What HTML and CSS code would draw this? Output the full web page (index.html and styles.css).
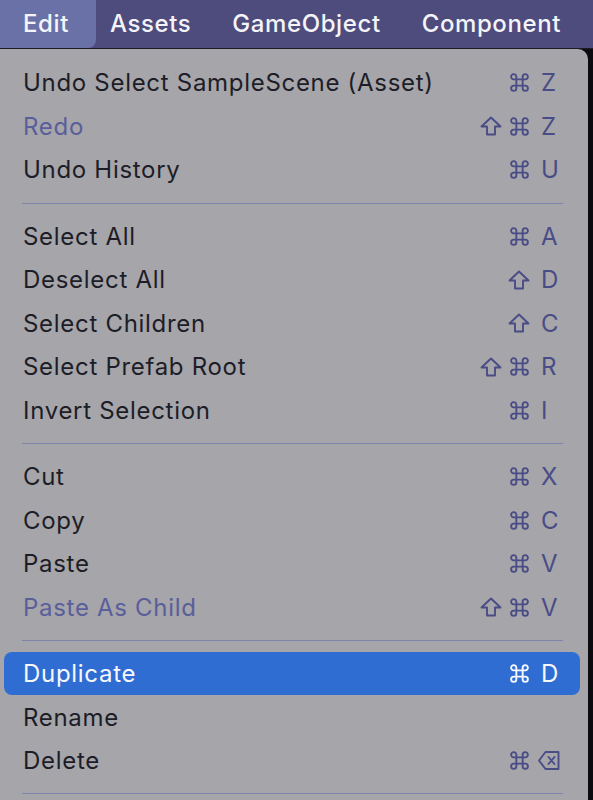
FILE: index.html
```html
<!DOCTYPE html>
<html>
<head>
<meta charset="utf-8">
<link rel="stylesheet" href="styles.css">
</head>
<body>
<svg width="0" height="0" class="defs">
  <defs>
    <symbol id="cmd" viewBox="0 0 20 20"><path d="M7 7V4.5A2.5 2.5 0 1 0 4.5 7H15.5A2.5 2.5 0 1 0 13 4.5V15.5A2.5 2.5 0 1 0 15.5 13H4.5A2.5 2.5 0 1 0 7 15.5Z" fill="none" stroke="currentColor" stroke-width="1.8" stroke-linejoin="round"/></symbol>
    <symbol id="shift" viewBox="0 0 22 20"><path d="M11 1.5L20.5 10.5H15V18.5H7V10.5H1.5Z" fill="none" stroke="currentColor" stroke-width="1.9" stroke-linejoin="round"/></symbol>
    <symbol id="del" viewBox="0 0 22 20"><path d="M7.5 1.5H20.5V18.5H7.5L1 10Z" fill="none" stroke="currentColor" stroke-width="1.9" stroke-linejoin="round"/><path d="M10.5 6.5L16.5 13.5M16.5 6.5L10.5 13.5" fill="none" stroke="currentColor" stroke-width="1.9" stroke-linecap="round"/></symbol>
  </defs>
</svg>
<div class="menubar">
  <div class="mb-item active">Edit</div>
  <div class="mb-item">Assets</div>
  <div class="mb-item">GameObject</div>
  <div class="mb-item">Component</div>
</div>
<div class="menu">
  <div class="row"><span class="label">Undo Select SampleScene (Asset)</span><span class="sc"><svg class="ic cmd"><use href="#cmd"/></svg><span class="key">Z</span></span></div>
  <div class="row disabled"><span class="label">Redo</span><span class="sc"><svg class="ic shift"><use href="#shift"/></svg><svg class="ic cmd"><use href="#cmd"/></svg><span class="key">Z</span></span></div>
  <div class="row"><span class="label">Undo History</span><span class="sc"><svg class="ic cmd"><use href="#cmd"/></svg><span class="key">U</span></span></div>
  <div class="sep"></div>
  <div class="row"><span class="label">Select All</span><span class="sc"><svg class="ic cmd"><use href="#cmd"/></svg><span class="key">A</span></span></div>
  <div class="row"><span class="label">Deselect All</span><span class="sc"><svg class="ic shift"><use href="#shift"/></svg><span class="key">D</span></span></div>
  <div class="row"><span class="label">Select Children</span><span class="sc"><svg class="ic shift"><use href="#shift"/></svg><span class="key">C</span></span></div>
  <div class="row"><span class="label">Select Prefab Root</span><span class="sc"><svg class="ic shift"><use href="#shift"/></svg><svg class="ic cmd"><use href="#cmd"/></svg><span class="key">R</span></span></div>
  <div class="row"><span class="label">Invert Selection</span><span class="sc"><svg class="ic cmd"><use href="#cmd"/></svg><span class="key">I</span></span></div>
  <div class="sep"></div>
  <div class="row"><span class="label">Cut</span><span class="sc"><svg class="ic cmd"><use href="#cmd"/></svg><span class="key">X</span></span></div>
  <div class="row"><span class="label">Copy</span><span class="sc"><svg class="ic cmd"><use href="#cmd"/></svg><span class="key">C</span></span></div>
  <div class="row"><span class="label">Paste</span><span class="sc"><svg class="ic cmd"><use href="#cmd"/></svg><span class="key">V</span></span></div>
  <div class="row disabled"><span class="label">Paste As Child</span><span class="sc"><svg class="ic shift"><use href="#shift"/></svg><svg class="ic cmd"><use href="#cmd"/></svg><span class="key">V</span></span></div>
  <div class="sep"></div>
  <div class="row selected"><span class="label">Duplicate</span><span class="sc"><svg class="ic cmd"><use href="#cmd"/></svg><span class="key">D</span></span></div>
  <div class="row"><span class="label">Rename</span><span class="sc"></span></div>
  <div class="row"><span class="label">Delete</span><span class="sc"><svg class="ic cmd"><use href="#cmd"/></svg><span class="key"><svg class="ic del"><use href="#del"/></svg></span></span></div>
  <div class="sep"></div>
</div>
</body>
</html>
```
FILE: styles.css
```css
html, body {
  margin: 0;
  padding: 0;
  background: #0c0c10;
  width: 593px;
  height: 800px;
  overflow: hidden;
  font-family: Inter, "Noto Sans", sans-serif;
}
.defs { position: absolute; }
.menubar {
  height: 48px;
  background: #4e4c7d;
  display: flex;
  align-items: stretch;
  border-bottom: 1px solid #1c1c24;
}
.mb-item {
  color: #f4f4f8;
  font-size: 24px;
  font-weight: 500;
  letter-spacing: 0.6px;
  display: flex;
  align-items: center;
  padding: 0 27px 2px 14px;
}
.mb-item.active {
  background: #6a71a7;
  padding-left: 23px;
  padding-right: 27px;
  border-radius: 0 0 8px 0;
}
.menu {
  width: 576px;
  height: 751px;
  background: #a5a5aa;
  padding: 12px 8px 0 4px;
  border-radius: 0 10px 0 0;
  box-sizing: content-box;
}
.row {
  height: 43.6px;
  display: flex;
  align-items: center;
  padding: 0 17px 0 19px;
  color: #1d1d27;
  font-size: 24px;
  letter-spacing: 0.7px;
  border-radius: 8px;
}
.row .label { flex: 1; }
.row.disabled { color: #5a5e9b; }
.sc {
  display: flex;
  align-items: center;
  color: #4a4c86;
  gap: 7px;
}
.key {
  width: 22px;
  margin-left: 4px;
  display: flex;
  align-items: center;
}
.ic { display: block; }
.ic.cmd { width: 21px; height: 21px; }
.ic.shift { width: 22px; height: 20px; }
.ic.del { width: 22px; height: 21px; margin-left: -3px; }
.row.selected { background: #2f6dd3; color: #f6f8fc; }
.row.selected .sc { color: #f6f8fc; }
.sep {
  height: 1px;
  background: #7f84aa;
  margin: 11px 17px 10.5px 18px;
}
```
